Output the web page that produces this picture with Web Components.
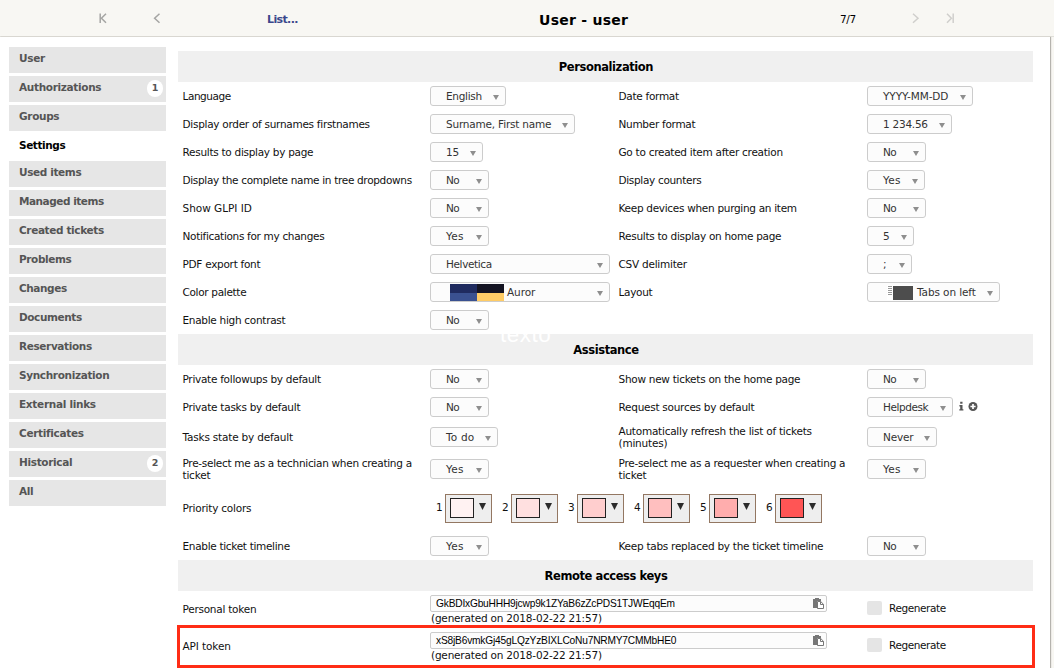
<!DOCTYPE html>
<html lang="en">
<head>
<meta charset="utf-8">
<title>User - user</title>
<style>
html,body{margin:0;padding:0}
body{width:1054px;height:668px;overflow:hidden;background:#f8f7f3;font:10.5px/12px "DejaVu Sans",Verdana,sans-serif;color:#111}
</style>
</head>
<body>
<user-page></user-page>
<script>
// Base class: renders markup() into an open shadow root.
class Base extends HTMLElement {
  connectedCallback() {
    if (this.shadowRoot) return;
    this.attachShadow({mode: 'open'}).innerHTML = this.markup();
    this.ready();
  }
  a(name, fallback = '') { return this.getAttribute(name) ?? fallback; }
  ready() {}
}

// A line of text tracked to a given width.
customElements.define('fit-text', class extends Base {
  markup() { return `<style>:host{display:block;white-space:pre;width:max-content}span{display:inline-block}</style><span><slot></slot></span>`; }
  ready() {
    const w = +this.a('w', 0), s = this.shadowRoot.querySelector('span'), n = this.textContent.length;
    if (!w || n < 2) return;
    const natural = s.getBoundingClientRect().width;
    s.style.letterSpacing = ((w + 0.3 - natural) / n).toFixed(3) + 'px';
  }
});

customElements.define('nav-icon', class extends Base {
  markup() {
    const d = {
      first: '<path d="M1.2 0.5V10M7 0.7L2.4 5.2 7 9.8"/>',
      prev: '<path d="M6.5 0.7L1.6 5.2 6.5 9.8"/>',
      next: '<path d="M1 0.7L6 5.2 1 9.8"/>',
      last: '<path d="M1 0.7L5.4 5.2 1 9.8M7.2 0.5V10"/>'
    }[this.a('kind')];
    return `<style>:host{display:block;width:8px;height:11px}svg{display:block}</style>
    <svg width="8" height="11" fill="none" stroke="${this.a('color')}" stroke-width="1.5">${d}</svg>`;
  }
});

customElements.define('page-header', class extends Base {
  markup() {
    return `<style>
    :host{display:grid;grid-template-columns:99px 54px 114px 272px 301px 72px 34px 1fr;height:36px;box-sizing:content-box;border-bottom:1px solid #e0dfd9;background:#f8f7f3;align-items:center}
    nav-icon{margin-top:1px}
    .list{font-weight:bold;font-size:11px;color:#3b478c;padding-top:3px}
    .title{font-weight:bold;font-size:14px;line-height:18px;color:#000;padding-top:3px}
    .n{padding-top:2px;color:#000}
    </style><i></i>
    <nav-icon kind="first" color="#a5a5a3"></nav-icon><nav-icon kind="prev" color="#a5a5a3"></nav-icon>
    <fit-text class="list" w="30.5">List...</fit-text><fit-text class="title" w="89">User - user</fit-text>
    <fit-text class="n" w="15.5">7/7</fit-text>
    <nav-icon kind="next" color="#d0cfcc"></nav-icon><nav-icon kind="last" color="#d0cfcc"></nav-icon>`;
  }
});

customElements.define('side-tab', class extends Base {
  markup() {
    const c = this.a('count');
    return `<style>
    :host{display:flex;justify-content:space-between;box-sizing:border-box;height:26px;padding:5px 3px 0 10px;background:#e6e6e6;color:#555;font-weight:bold}
    :host([active]){height:24px;background:#fff;color:#000}
    b{display:block;width:16px;height:17px;border-radius:8px;background:#fff;font-size:9.5px;line-height:16px;text-align:center;margin-top:-1px}
    </style><fit-text w="${this.a('w')}">${this.textContent}</fit-text>${c ? `<b>${c}</b>` : ''}`;
  }
});

customElements.define('side-tabs', class extends Base {
  markup() {
    const tabs = [['User',25.5],['Authorizations',82,1],['Groups',40],['Settings',46],['Used items',62],['Managed items',84.5],['Created tickets',84.5],['Problems',52],['Changes',47.5],['Documents',62.5],['Reservations',72.5],['Synchronization',90],['External links',76.5],['Certificates',64],['Historical',53,2],['All',14]];
    return `<style>:host{display:flex;flex-direction:column;gap:3px}</style>` +
      tabs.map(([t, w, c]) => `<side-tab w="${w}" ${c ? `count="${c}"` : ''} ${t === 'Settings' ? 'active' : ''}>${t}</side-tab>`).join('');
  }
});

customElements.define('select-box', class extends Base {
  markup() {
    return `<style>
    :host{display:flex;align-items:center;box-sizing:border-box;width:${this.a('box')}px;height:20px;border:1px solid #ccc;border-radius:3px;background:#fcfcfc;color:#333;padding:0 6px 0 15px}
    .arrow{margin:3px 0 0 auto;border:3px solid transparent;border-top:5px solid #8e8e8e;border-bottom:0}
    </style><slot name="icon"></slot><fit-text class="v" w="${this.a('w')}">${this.a('value')}</fit-text><span class="arrow"></span>`;
  }
});

customElements.define('palette-icon', class extends Base {
  markup() {
    return `<style>:host{display:grid;grid-template:9px 8px / 27px 27px;margin:0 3px 0 4px}</style>
    <i style="background:#1f2b5f"></i><i style="background:#141422"></i><i style="background:#3a5190"></i><i style="background:#ffcc66"></i>`;
  }
});

customElements.define('layout-icon', class extends Base {
  markup() {
    return `<style>:host{display:block;margin:1px 4px 0 4px}svg{display:block}</style>
    <svg width="26" height="15" shape-rendering="crispEdges"><path d="M0 0h26v15h-26z" fill="#fff"/><path d="M1 1.5h4M1 3.5h4M1 5.5h4M1 7.5h4M1 9.5h4" stroke="#999"/><path d="M6 1h20v14h-20z" fill="#4d4d4d"/></svg>`;
  }
});

customElements.define('section-head', class extends Base {
  markup() {
    return `<style>:host{display:flex;justify-content:center;align-items:center;height:31px;background:#f0f0f0;font-weight:bold;font-size:11.5px;color:#000;position:relative}fit-text{margin:1px 0 0 1px}</style>
    <fit-text w="${this.a('w')}">${this.textContent}</fit-text>`;
  }
});

customElements.define('form-row', class extends Base {
  markup() {
    return `<style>
    :host{display:grid;grid-template-columns:247.5px 188.5px 248.5px 1fr;align-items:center;padding-left:4.5px;height:${this.a('h', 28)}px;position:relative}
    ::slotted(.wide){grid-column:span 3}
    </style><slot></slot>`;
  }
});

customElements.define('color-pick', class extends Base {
  markup() {
    return `<style>
    :host{display:flex;width:66px;align-items:center}
    .n{width:9px;margin-top:-3px}
    .box{box-sizing:border-box;width:47px;height:29px;border:1px solid #937762;background:#eee;padding:3px 0 0 4px;display:flex}
    .sw{box-sizing:border-box;width:24px;height:20px;border:1px solid #222;background:${this.a('c')}}
    svg{margin:5px 0 0 5px}
    </style><span class="n">${this.a('n')}</span><span class="box"><span class="sw"></span><svg width="7" height="7"><path d="M0 0h7L3.5 7z" fill="#2b2b2b"/></svg></span>`;
  }
});

customElements.define('token-field', class extends Base {
  markup() {
    return `<style>
    :host{display:block;width:397px;height:29px}
    .in{box-sizing:border-box;height:17px;border:1px solid #ccc;border-radius:2px;background:#fcfcfc;display:flex;justify-content:space-between;align-items:center;padding:0 2px 0 5px;font-family:"Liberation Sans",Arial,sans-serif;font-size:10.2px;color:#000}
    .g{padding:0 0 0 1px}
    svg{display:block}
    </style><div class="in"><fit-text w="${this.a('w')}">${this.a('value')}</fit-text>
    <svg width="11" height="11"><path d="M0 1h2V0h4v1h2v2H4v7H0z" fill="#777"/><path d="M4.5 3.5h3.2l2.8 2.8v4.2h-6z" fill="#fff" stroke="#777"/><path d="M7.5 3.5v3h3" fill="none" stroke="#777"/></svg></div>
    <fit-text class="g" w="170.5">(generated on 2018-02-22 21:57)</fit-text>`;
  }
});

customElements.define('check-box', class extends Base {
  markup() {
    return `<style>:host{display:flex;gap:7px;align-items:center}i{width:15px;height:14px;border-radius:2px;background:#e5e5e5;margin-top:-4px}fit-text{margin-top:-3px}</style>
    <i></i><fit-text w="56.5">Regenerate</fit-text>`;
  }
});

customElements.define('hint-icons', class extends Base {
  markup() {
    return `<style>:host{display:block;margin:-1px 0 0 6px}svg{display:block}</style>
    <svg width="20" height="11"><path d="M1.2 0.8h2.3v2H1.2zM0.4 4h3.1v4.2h0.9v1.4H0.3V8.2h0.9V5.4H0.4z" fill="#555"/><circle cx="14" cy="5.5" r="4.5" fill="#555"/><path d="M14 2.9v5.2M11.4 5.5h5.2" stroke="#fff" stroke-width="1.7"/></svg>`;
  }
});

customElements.define('settings-form', class extends Base {
  markup() {
    const label = (lines, cls = '') => `<div class="${cls}">${lines.map(([t, w]) => `<fit-text w="${w}">${t}</fit-text>`).join('')}</div>`;
    const sel = ([v, w, box, icon]) => `<select-box value="${v}" w="${w}" box="${box}">${icon ? `<${icon} slot="icon"></${icon}>` : ''}</select-box>`;
    const NO = ['No', 13, 59], YES = ['Yes', 17.5, 59];
    const row = (l, s, l2, s2, h = 28) => `<form-row h="${h}">${label(l)}${sel(s)}${l2 ? label(l2) + `<div class="c">${sel(s2)}${s2[0] === 'Helpdesk' ? '<hint-icons></hint-icons>' : ''}</div>` : ''}</form-row>`;
    const colors = ['#fff2f2', '#ffe0e0', '#ffcece', '#ffbfbf', '#ffadad', '#ff5555'];
    const token = (t, w, v, vw, hl) => `<form-row h="37">${label([[t, w]], 'odd')}<token-field value="${v}" w="${vw}"></token-field><i></i><check-box></check-box>${hl ? '<span class="mark"></span>' : ''}</form-row>`;
    return `<style>
    :host{display:block}
    .c,.picks{display:flex;align-items:center}
    .odd{padding-bottom:1px}
    .picks{margin-left:6px}
    .mark{position:absolute;left:-1px;top:-3px;width:858px;height:43px;box-sizing:border-box;border:3px solid #ff2d16}
    .ghost{position:absolute;left:322px;top:-11px;color:#fff;font:22.5px/24px "Liberation Sans",Arial,sans-serif}
    .wrap{position:relative}
    </style>
    <section-head w="94">Personalization</section-head>` +
    row([['Language', 48]], ['English', 35.5, 76], [['Date format', 60]], ['YYYY-MM-DD', 65, 106]) +
    row([['Display order of surnames firstnames', 187]], ['Surname, First name', 105, 145], [['Number format', 76.5]], ['1 234.56', 44.5, 85]) +
    row([['Results to display by page', 130.5]], ['15', 12.5, 53], [['Go to created item after creation', 164]], NO) +
    row([['Display the complete name in tree dropdowns', 229]], NO, [['Display counters', 82.5]], ['Yes', 17.5, 58]) +
    row([['Show GLPI ID', 69]], NO, [['Keep devices when purging an item', 178]], NO) +
    row([['Notifications for my changes', 141.5]], YES, [['Results to display on home page', 162.5]], ['5', 0, 47]) +
    row([['PDF export font', 77.5]], ['Helvetica', 45.5, 180], [['CSV delimiter', 68]], [';', 0, 45]) +
    row([['Color palette', 63.5]], ['Auror', 28, 180, 'palette-icon'], [['Layout', 33.5]], ['Tabs on left', 58.5, 133, 'layout-icon']) +
    row([['Enable high contrast', 102.5]], NO) +
    `<div class="wrap"><section-head w="65">Assistance</section-head><fit-text class="ghost" w="51">texto</fit-text></div>` +
    row([['Private followups by default', 138]], NO, [['Show new tickets on the home page', 181.5]], NO) +
    row([['Private tasks by default', 117.5]], NO, [['Request sources by default', 135.5]], ['Helpdesk', 45, 86]) +
    row([['Tasks state by default', 110]], ['To do', 28, 68], [['Automatically refresh the list of tickets', 193], ['(minutes)', 48.5]], ['Never', 30, 70], 32) +
    row([['Pre-select me as a technician when creating a', 229], ['ticket', 27.5]], YES, [['Pre-select me as a requester when creating a', 226.5], ['ticket', 27.5]], YES, 32) +
    `<form-row h="47">${label([['Priority colors', 68.5]], 'odd')}<div class="wide picks">${colors.map((c, i) => `<color-pick n="${i + 1}" c="${c}"></color-pick>`).join('')}</div></form-row>` +
    row([['Enable ticket timeline', 107]], YES, [['Keep tabs replaced by the ticket timeline', 204.5]], NO) +
    `<section-head w="122.5">Remote access keys</section-head>` +
    token('Personal token', 73.5, 'GkBDIxGbuHHH9jcwp9k1ZYaB6zZcPDS1TJWEqqEm', 238.5) +
    token('API token', 48, 'xS8jB6vmkGj45gLQzYzBIXLCoNu7NRMY7CMMbHE0', 240, true);
  }
});

customElements.define('user-page', class extends Base {
  markup() {
    return `<style>
    :host{display:block}
    main{box-sizing:border-box;display:grid;grid-template-columns:157px 855px;column-gap:12px;width:1050px;height:631px;background:#fff;box-shadow:1px 0 1px #b5b3ae;padding:10px 0 0 9px}
    settings-form{margin-top:4px}
    </style><page-header></page-header><main><side-tabs></side-tabs><settings-form></settings-form></main>`;
  }
});
</script>
</body>
</html>
